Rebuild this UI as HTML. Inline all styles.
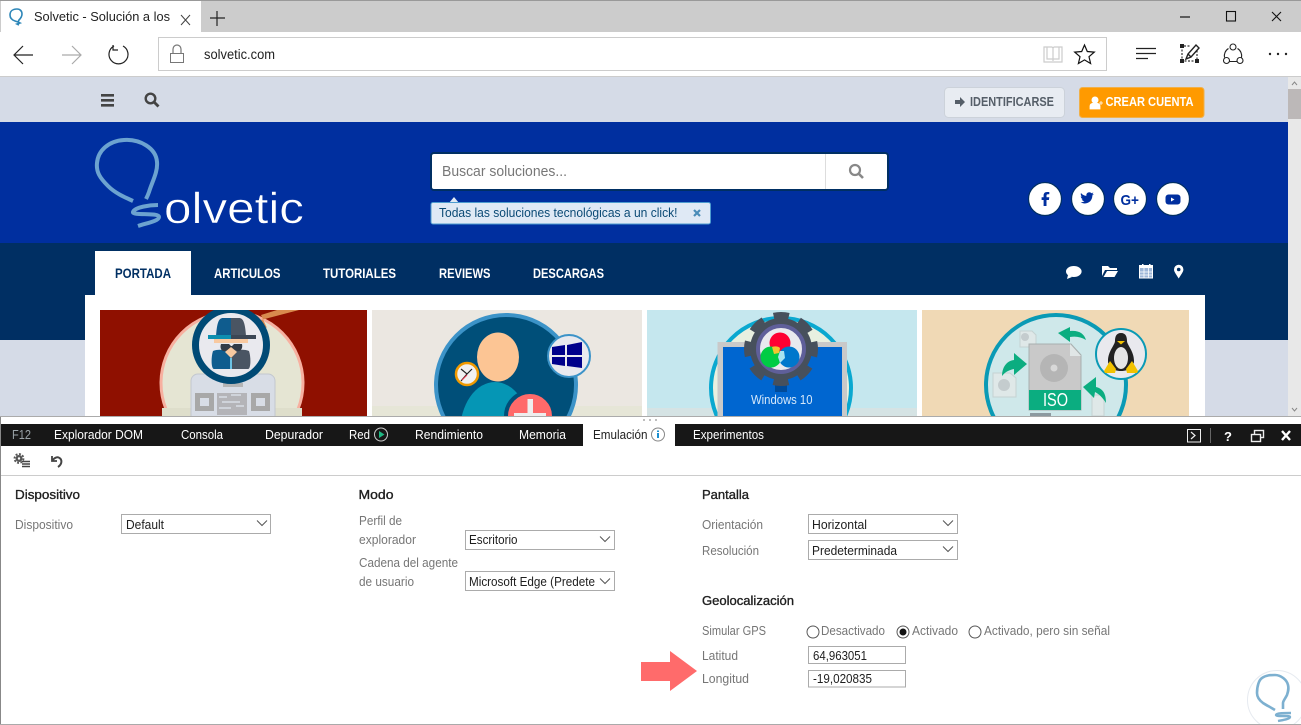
<!DOCTYPE html>
<html lang="es">
<head>
<meta charset="utf-8">
<title>Solvetic</title>
<style>
html,body{margin:0;padding:0;background:#fff;width:1301px;height:725px;overflow:hidden}
svg{display:block}
text{font-family:"Liberation Sans",sans-serif;font-size:12.5px;white-space:pre}
.l{fill:#767676}
.v{fill:#1e1e1e}
.h{font-size:12.8px;fill:#1f1f1f;stroke:#1f1f1f;stroke-width:.35px}
.t{fill:#fff}
.n{font-weight:bold;font-size:14px;fill:#fff}
.s{fill:#fff;stroke:#ababab}
.c{fill:none;stroke:#555;stroke-width:1}
</style>
</head>
<body>
<svg width="1301" height="725" viewBox="0 0 1301 725" xmlns="http://www.w3.org/2000/svg">
<defs>
<clipPath id="c1"><rect x="100" y="310" width="267" height="106"/></clipPath>
<clipPath id="c2"><rect x="372" y="310" width="270" height="106"/></clipPath>
<clipPath id="c3"><rect x="647" y="310" width="270" height="106"/></clipPath>
<clipPath id="c4"><rect x="922" y="310" width="267" height="106"/></clipPath>
<clipPath id="wm"><rect x="1200" y="660" width="101" height="64"/></clipPath>
</defs>

<!-- browser chrome -->
<rect width="1301" height="725" fill="#fff"/>
<rect width="1301" height="32" fill="#ccc"/>
<rect width="1301" height="1" fill="#999"/>
<rect x="1" y="1" width="200" height="31" fill="#fff"/>
<path d="M17 9c-4 0-7 2-7 6 0 3 2 5 5 6l3 1 1-2c2-2 3-4 3-6 0-3-2-5-5-5zM18 22l2 1-3 1 2 1" fill="none" stroke="#2d86b8" stroke-width="1.6"/>
<text x="34" y="21" style="font-size:13px" fill="#222" textLength="136" lengthAdjust="spacingAndGlyphs">Solvetic - Solución a los</text>
<path d="M181 15l9 10M190 15l-9 10" stroke="#444" stroke-width="1" fill="none"/>
<path d="M217 11v15M210 18h15" stroke="#222" stroke-width="1.2" fill="none"/>
<path d="M1180 17h10" stroke="#111" stroke-width="1.2"/>
<rect x="1226.5" y="11.5" width="9" height="9.5" fill="none" stroke="#111" stroke-width="1.1"/>
<path d="M1272 12l9 9M1281 12l-9 9" stroke="#111" stroke-width="1.1"/>

<path d="M33 55H15M23 46l-9 9 9 9" fill="none" stroke="#222" stroke-width="1.2"/>
<path d="M81 55H62M72 46l9 9-9 9" fill="none" stroke="#aaa" stroke-width="1.2"/>
<path d="M114 46a9.5 9.5 0 1 0 9 0M113 45v5h5" fill="none" stroke="#222" stroke-width="1.2"/>
<rect x="158.500" y="37.500" width="948" height="33" fill="#fff" stroke="#ccc"/>
<rect x="170.500" y="53.500" width="13" height="9" fill="#fff" stroke="#777"/>
<path d="M173 53v-4a4 4 0 0 1 8 0v4" fill="none" stroke="#777" stroke-width="1.2"/>
<text x="204" y="59" fill="#222" style="font-size:13.5px" textLength="71" lengthAdjust="spacingAndGlyphs">solvetic.com</text>
<path d="M1044 47h8l1 1 1-1h8v15h-18zM1053 48v13M1047 47v12h6M1059 47v12h-6" fill="none" stroke="#ccc" stroke-width="1.2"/>
<path d="M1084.500 45l2.800 6.500 7 .6-5.300 4.600 1.600 6.800-6.100-3.600-6.100 3.600 1.600-6.800-5.300-4.600 7-.6z" fill="none" stroke="#111" stroke-width="1.2"/>
<path d="M1136 48.500h20M1136 53.500h20M1136 58.500h12" stroke="#222" stroke-width="1.2"/>
<path d="M1182 46v15h15V50M1184 46h7" fill="none" stroke="#333" stroke-width="1.2" stroke-dasharray="2 1.500"/>
<path d="M1180 44h4v4h-4zM1180 59h4v4h-4zM1195 59h4v4h-4z" fill="#222"/>
<path d="M1186 59l2-5 8-9 3 3-8 9zM1188 54l3 3" fill="none" stroke="#222" stroke-width="1.4"/>
<path d="M1228.500 48.500a8.500 8.500 0 0 0-4 9M1237.500 48.500a8.500 8.500 0 0 1 4 9M1229 61.500h8" fill="none" stroke="#222" stroke-width="1.1"/>
<circle cx="1233" cy="47" r="3" fill="#fff" stroke="#222" stroke-width="1.1"/>
<circle cx="1226.500" cy="60.500" r="3" fill="#fff" stroke="#222" stroke-width="1.1"/>
<circle cx="1240" cy="60.500" r="3" fill="#fff" stroke="#222" stroke-width="1.1"/>
<circle cx="1270" cy="54" r="1.200" fill="#222"/><circle cx="1278" cy="54" r="1.200" fill="#222"/><circle cx="1286" cy="54" r="1.200" fill="#222"/>
<rect y="76" width="1301" height="1" fill="#ccc"/>

<!-- page -->
<rect y="77" width="1288" height="339" fill="#d5dbe7"/>
<rect y="122" width="1288" height="121" fill="#002f9f"/>
<rect y="243" width="1288" height="97" fill="#002f63"/>
<rect x="85" y="295" width="1120" height="121" fill="#fff"/>
<rect x="95" y="251" width="96" height="44" fill="#fff"/>

<!-- scrollbar -->
<rect x="1288" y="77" width="13" height="339" fill="#e8e8e8"/>
<rect x="1288" y="89" width="13" height="30" fill="#bcb8b8"/>
<path d="M1292 85l2.500-3 2.500 3M1292 408l2.500 3 2.500-3" fill="none" stroke="#888"/>

<!-- top bar -->
<path d="M101 94h13v2.600h-13zM101 99h13v2.600h-13zM101 104h13v2.600h-13z" fill="#444"/>
<circle cx="150.500" cy="98.500" r="4.800" fill="none" stroke="#444" stroke-width="2.400"/>
<path d="M154 102l4.500 4.500" stroke="#444" stroke-width="2.800"/>
<rect x="944.500" y="87.500" width="120" height="30" rx="4" fill="#e8ecf2" stroke="#ccd2da"/>
<path d="M955 100h5v-3l5 5-5 5v-3h-5z" fill="#555e68"/>
<text x="970" y="106" fill="#555e68" style="font-size:12.500px;font-weight:bold" textLength="84" lengthAdjust="spacingAndGlyphs">IDENTIFICARSE</text>
<rect x="1079.500" y="87.500" width="124.500" height="30" rx="3" fill="#ff9a00" stroke="#f0b04a"/>
<circle cx="1095" cy="100" r="3.500" fill="#fff"/>
<path d="M1090 109v-3c0-2 2-3 5-3s5 1 5 3v3zM1099 103h4M1101 101v4" fill="#fff" stroke="#fff" stroke-width=".8"/>
<text x="1105.500" y="106" fill="#fff" style="font-size:12.500px;font-weight:bold" textLength="88" lengthAdjust="spacingAndGlyphs">CREAR CUENTA</text>

<!-- logo -->
<path d="M133 201C124 197 115 193 108 186C100 178 96 172 97 163C98 151 108 141 124 140C140 139 156 148 157 162C158 172 152 182 149 192C148 195 147 197 146 199" fill="none" stroke="#6ca3d0" stroke-width="4"/>
<path d="M158 205C150 205 135 207 133 212C132 216 159 212 159 217C159 221 147 223 138 226" fill="none" stroke="#6ca3d0" stroke-width="4"/>
<text x="164" y="223" fill="#fff" stroke="#002f9f" stroke-width=".5" style="font-size:44px" textLength="140" lengthAdjust="spacingAndGlyphs">olvetic</text>

<!-- search -->
<rect x="431" y="153" width="457" height="37" rx="3" fill="#fff" stroke="#002f63" stroke-width="2"/>
<rect x="825" y="154" width="1" height="35" fill="#ddd"/>
<text x="442" y="176" fill="#777" style="font-size:14.500px" textLength="125" lengthAdjust="spacingAndGlyphs">Buscar soluciones...</text>
<circle cx="855" cy="170" r="5" fill="none" stroke="#888" stroke-width="2.200"/>
<path d="M859 174l4 4" stroke="#888" stroke-width="2.600"/>
<path d="M449 203l5-6 5 6z" fill="#dfe9f5"/>
<rect x="431" y="202.500" width="279.500" height="21.500" rx="2" fill="#dfe9f5" stroke="#4d9ccf"/>
<text x="439" y="217" fill="#0b4a75" textLength="238.500" lengthAdjust="spacingAndGlyphs">Todas las soluciones tecnológicas a un click!</text>
<path d="M694 210l6 6M700 210l-6 6" stroke="#4a8cb8" stroke-width="2.200"/>

<!-- social -->
<g fill="#fff" stroke="#002f63" stroke-width="1.200">
<circle cx="1045" cy="199" r="16.500"/><circle cx="1088" cy="199" r="16.500"/><circle cx="1130" cy="199" r="16.500"/><circle cx="1173" cy="199" r="16.500"/>
</g>
<path d="M1046.500 206v-6h2.400l.4-2.700h-2.800v-1.700c0-.9.300-1.300 1.300-1.300h1.500v-2.300h-2.200c-2.400 0-3.500 1.400-3.500 3.500v1.800h-2v2.700h2v6z" fill="#002f9f"/>
<path transform="translate(1081 193) scale(.72) translate(-1081 -193)" d="M1081 193c2 2.500 4.500 3.800 7.500 4-.5-3 1.500-5 4-5 1.300 0 2.200.5 3 1.300l2.700-1-1.600 2.600 2.400-.6-2.200 2.200c0 6-4 11-10.500 11-2.200 0-4-.6-5.800-1.700 2 .2 3.800-.3 5.300-1.500-2 0-3.200-1-3.700-2.700h1.800c-2-.6-3.200-2-3.200-4l1.800.5c-1.800-1.300-2.300-3.500-1.500-5.100z" fill="#002f9f"/>
<text x="1120.500" y="205" fill="#002f9f" style="font-size:15px;font-weight:bold" textLength="18.500" lengthAdjust="spacingAndGlyphs">G+</text>
<rect x="1165.500" y="194.500" width="15" height="10" rx="3" fill="#002f9f"/>
<path d="M1171 197.500v4l3.500-2z" fill="#fff"/>

<!-- nav -->
<text x="115" y="278" class="n" style="fill:#002f63" textLength="56" lengthAdjust="spacingAndGlyphs">PORTADA</text>
<text x="214" y="278" class="n" textLength="66.500" lengthAdjust="spacingAndGlyphs">ARTICULOS</text>
<text x="323" y="278" class="n" textLength="73" lengthAdjust="spacingAndGlyphs">TUTORIALES</text>
<text x="439" y="278" class="n" textLength="51.500" lengthAdjust="spacingAndGlyphs">REVIEWS</text>
<text x="533" y="278" class="n" textLength="71" lengthAdjust="spacingAndGlyphs">DESCARGAS</text>
<ellipse cx="1073.800" cy="271.500" rx="7.800" ry="5.500" fill="#fff"/>
<path d="M1068 275l-1 4 5-2z" fill="#fff"/>
<path d="M1102 266v10l3-6h12v-2h-7l-2-2h-6z" fill="#fff"/>
<path d="M1103.500 277h11l3.500-6h-11z" fill="#fff"/>
<rect x="1139.500" y="266.500" width="13" height="11.500" fill="#9db6d8" stroke="#fff"/>
<path d="M1139 265h14v3h-14zM1142 264h1.500v3H1142zM1149 264h1.500v3H1149z" fill="#fff"/>
<path d="M1144 268v10M1148.500 268v10M1139.500 272h13M1139.500 275h13" stroke="#fff" stroke-width=".8"/>
<path d="M1178.700 278.500c-2-3.500-4.700-6.500-4.700-9a4.700 4.700 0 0 1 9.400 0c0 2.500-2.700 5.500-4.700 9z" fill="#fff"/>
<circle cx="1178.700" cy="269.500" r="1.800" fill="#002f63"/>

<!-- card 1 -->
<g clip-path="url(#c1)">
<rect x="100" y="310" width="267" height="106" fill="#8f1000"/>
<circle cx="232" cy="383" r="71" fill="#e5e5d3" stroke="#f7b0a0" stroke-width="3"/>
<rect x="162" y="408" width="140" height="8" fill="#dedecb"/>
<path d="M257 321l42-11h-22l-16 5 6 13z" fill="#d98a4e"/>
<rect x="191" y="374" width="84" height="48" rx="7" fill="#d8dde6" stroke="#c2c7cf"/>
<rect x="223" y="383" width="20" height="4" fill="#b5b5b5"/>
<rect x="195" y="393" width="19" height="18" fill="#a8a8a8"/><rect x="200" y="398" width="9" height="8" fill="#d8dde6"/>
<rect x="251" y="393" width="19" height="18" fill="#a8a8a8"/><rect x="256" y="398" width="9" height="8" fill="#d8dde6"/>
<rect x="217" y="393" width="30" height="22" fill="#b4b4b8"/>
<path d="M219 397h8M231 395h10M222 402h18M219 408h12M236 406h8" stroke="#d8dde6" stroke-width="1.500"/>
<circle cx="231" cy="345" r="35.500" fill="#e9e9ee" stroke="#004a75" stroke-width="7"/>
<path d="M231 318h-8c-4 0-6 4-7 18h15z" fill="#0f5c8e"/>
<path d="M231 318h8c4 0 6 4 7 18h-15z" fill="#4a5563"/>
<rect x="208" y="335" width="23" height="4" fill="#0d8fb0"/>
<rect x="231" y="335" width="25" height="4" fill="#3b4654"/>
<rect x="214" y="339" width="34" height="4" fill="#f8c9a0"/>
<path d="M213 351c8-3 14 0 18 3v15h-17c-3 0-3-12-1-18z" fill="#0f5c8e"/>
<path d="M249 351c-8-3-14 0-18 3v15h17c3 0 3-12 1-18z" fill="#4a5563"/>
<path d="M221 344h8l2 2h1l2-2h8c1 4-1 8-5 7-3 0-5-2-5.500-3-.5 1-3 3-6 3-4 1-6-3-4.500-7z" fill="#333b46"/>
<path d="M225 352l6-5 6 5-6 6z" fill="#f8c9a0"/>
<path d="M230 358h2v11h-2z" fill="#6cc2e4"/>
</g>

<!-- card 2 -->
<g clip-path="url(#c2)">
<rect x="372" y="310" width="270" height="106" fill="#ebe7e1"/>
<rect x="372" y="406" width="270" height="10" fill="#e6e6d7"/>
<circle cx="506" cy="385" r="70" fill="#004f79" stroke="#3c93c8" stroke-width="4"/>
<ellipse cx="495" cy="432" rx="35" ry="50" fill="#0596b5"/>
<ellipse cx="498" cy="357" rx="21" ry="24.500" fill="#fcc594"/>
<circle cx="569" cy="356" r="21" fill="#e9e9ee" stroke="#3c93c8" stroke-width="2"/>
<path d="M552 347l13-2v10h-13zM567 345l15-3v13h-15zM552 357h13v9l-13-2zM567 357h15v11l-15-2z" fill="#00008b"/>
<circle cx="467" cy="374" r="11" fill="#f1f1f1" stroke="#f09a00" stroke-width="2.500"/>
<path d="M461 369l6 5 5-5M467 374l-6 7" stroke="#222" stroke-width="1.200" fill="none"/>
<path d="M467 375l-5 5" stroke="#e5334c" stroke-width="1"/>
<circle cx="530" cy="416" r="24" fill="#ff6a6a" stroke="#004f79" stroke-width="4"/>
<rect x="527.500" y="399" width="5.500" height="14" fill="#eee"/>
<rect x="514" y="413" width="32" height="3" fill="#eee"/>
</g>

<!-- card 3 -->
<g clip-path="url(#c3)">
<rect x="647" y="310" width="270" height="106" fill="#c5e7ee"/>
<rect x="647" y="408" width="270" height="8" fill="#d5e3e4"/>
<circle cx="781" cy="388" r="70" fill="#e8f0e0" stroke="#0aa8d0" stroke-width="4"/>
<rect x="717.500" y="342" width="129.500" height="80" fill="#c9c9c9"/>
<rect x="723" y="347" width="119" height="70" fill="#0066d0"/>
<rect x="775" y="380" width="12" height="12" fill="#004a98"/>
<circle cx="781" cy="349" r="31" fill="#47505c"/>
<circle cx="781" cy="349" r="33" fill="none" stroke="#47505c" stroke-width="8" stroke-dasharray="15 10.920" stroke-dashoffset="7.500"/>
<circle cx="781" cy="349" r="23" fill="#e9e9ee" stroke="#5f5f9a" stroke-width="4"/>
<circle cx="780" cy="343" r="10.500" fill="#ff0033"/>
<circle cx="771" cy="357" r="10.500" fill="#00cc44"/>
<circle cx="789" cy="357" r="10.500" fill="#0077cc"/>
<path d="M772 347c3-1 6-1 8 1l-1 5-5 1z" fill="#f2c530"/>
<path d="M780 351l4 0 1 7-5 5-2-6z" fill="#a8e4f0"/>
<text x="751" y="404" fill="#d5e8fa" textLength="61.500" lengthAdjust="spacingAndGlyphs">Windows 10</text>
</g>

<!-- card 4 -->
<g clip-path="url(#c4)">
<rect x="922" y="310" width="267" height="106" fill="#f0d9b5"/>
<circle cx="1056" cy="385" r="70" fill="#cfe8ea" stroke="#0a9ab5" stroke-width="4"/>
<path d="M1020 331h12l4 4v12h-16zM993 373h17l6 5v19h-23zM1092 395h12v21h-12z" fill="#dfe8e8" stroke="#c5d2d2"/>
<circle cx="1004" cy="385" r="6" fill="#c4ccce"/>
<circle cx="1025" cy="337" r="4" fill="#c4ccce"/>
<path d="M1029 344h42l10 11v55h-52z" fill="#c9c9c9" stroke="#a8b0b0"/>
<path d="M1070 344v12h11z" fill="#e0e6e6"/>
<circle cx="1054" cy="368" r="14" fill="#b5b5b5"/>
<circle cx="1054" cy="368" r="3.500" fill="#d8d8d8"/>
<rect x="1029" y="390" width="52" height="20" fill="#0bad80"/>
<text x="1043" y="406" fill="#fff" style="font-size:18px" textLength="25" lengthAdjust="spacingAndGlyphs">ISO</text>
<rect x="1030" y="413" width="21" height="3" fill="#8d9aa0"/>
<path d="M1002 376c0-8 4-15 12-16v-7l13 11-13 11v-6c-5 1-9 3-12 7z" fill="#0bad80"/>
<path d="M1058 333l12-6v4c8-1 14 2 16 9-5-3-10-4-16-3v5z" fill="#0bad80"/>
<path d="M1106 403c0-8-2-14-10-16v-10l-13 10 11 11 1-6c4 2 8 6 11 11z" fill="#0bad80"/>
<circle cx="1121" cy="354" r="25" fill="#e9e9ee" stroke="#0a9ab5" stroke-width="2"/>
<path d="M1121 333c-5 0-6 4-6 8 0 4-7 10-7 20 0 5 4 10 13 10s13-5 13-10c0-10-7-16-7-20 0-4-1-8-6-8z" fill="#222"/>
<ellipse cx="1121" cy="358" rx="7" ry="11" fill="#e5e5e5"/>
<path d="M1117 341h8l-4 3.500z" fill="#f2c200"/>
<path d="M1104 371l6-10 6 8-1 4h-10zM1138 371l-6-10-6 8 1 4h10z" fill="#f2c200"/>
</g>

<!-- devtools -->
<rect y="416" width="1301" height="1" fill="#ababab"/>
<rect y="417" width="1301" height="308" fill="#fff"/>
<circle cx="644" cy="420" r="1" fill="#aaa"/><circle cx="650" cy="420" r="1" fill="#aaa"/><circle cx="656" cy="420" r="1" fill="#aaa"/>
<rect y="424" width="1301" height="22" fill="#171717"/>
<rect x="583" y="424" width="92" height="22" fill="#fff"/>
<text x="12" y="439" fill="#9aa3a8" textLength="19" lengthAdjust="spacingAndGlyphs">F12</text>
<text x="54" y="439" class="t" textLength="89" lengthAdjust="spacingAndGlyphs">Explorador DOM</text>
<text x="181" y="439" class="t" textLength="42" lengthAdjust="spacingAndGlyphs">Consola</text>
<text x="265" y="439" class="t" textLength="58" lengthAdjust="spacingAndGlyphs">Depurador</text>
<text x="349" y="439" class="t" textLength="21" lengthAdjust="spacingAndGlyphs">Red</text>
<circle cx="381" cy="434.500" r="6.500" fill="none" stroke="#ccc"/>
<path d="M379 431v7l5.500-3.500z" fill="#1fb883"/>
<text x="415" y="439" class="t" textLength="68" lengthAdjust="spacingAndGlyphs">Rendimiento</text>
<text x="519" y="439" class="t" textLength="47" lengthAdjust="spacingAndGlyphs">Memoria</text>
<text x="593" y="439" fill="#222" textLength="54.500" lengthAdjust="spacingAndGlyphs">Emulación</text>
<circle cx="658" cy="434.500" r="6.500" fill="#fff" stroke="#888"/>
<path d="M657 433h2v5h-2zM657 430.500h2v1.500h-2z" fill="#1a8fd0"/>
<text x="693" y="439" class="t" textLength="71" lengthAdjust="spacingAndGlyphs">Experimentos</text>
<rect x="1187.500" y="429.500" width="13" height="12.500" fill="none" stroke="#eee"/>
<path d="M1191 432l4 3.500-4 3.500" fill="none" stroke="#eee" stroke-width="1.200"/>
<rect x="1210" y="428" width="1" height="15" fill="#666"/>
<text x="1224" y="441" fill="#fff" style="font-size:13px;font-weight:bold">?</text>
<rect x="1254.500" y="430.500" width="9" height="7" fill="none" stroke="#eee" stroke-width="1.400"/>
<rect x="1251.500" y="434.500" width="9" height="7" fill="#171717" stroke="#eee" stroke-width="1.400"/>
<path d="M1282 431l8 9M1290 431l-8 9" stroke="#fff" stroke-width="2.400"/>
<circle cx="19" cy="458.500" r="3.500" fill="#555"/>
<circle cx="19" cy="458.500" r="4.500" fill="none" stroke="#555" stroke-width="1.800" stroke-dasharray="2 1.500"/>
<circle cx="19" cy="458.500" r="1.200" fill="#fff"/>
<path d="M22 461.500h8M22 464h8M22 466.500h8" stroke="#444" stroke-width="1.400"/>
<path d="M52 456v5h5" fill="none" stroke="#444" stroke-width="1.800"/>
<path d="M52.500 460.500c2-3 5-4 7-2.500 2.500 1.500 3 6-1.500 9" fill="none" stroke="#444" stroke-width="2"/>
<rect y="475" width="1301" height="1" fill="#ccc"/>
<rect y="417" width="1" height="308" fill="#888"/>
<rect y="724" width="1301" height="1" fill="#aaa"/>

<!-- dispositivo -->
<text x="15" y="499" class="h" textLength="65" lengthAdjust="spacingAndGlyphs">Dispositivo</text>
<text x="15" y="529" class="l" textLength="58" lengthAdjust="spacingAndGlyphs">Dispositivo</text>
<rect x="121.500" y="514.500" width="149" height="19" class="s"/>
<text x="126" y="529" class="v" textLength="38" lengthAdjust="spacingAndGlyphs">Default</text>
<path d="M257 520.500l5 5 5-5" class="c"/>

<!-- modo -->
<text x="358.500" y="499" class="h" textLength="35" lengthAdjust="spacingAndGlyphs">Modo</text>
<text x="359" y="525" class="l" textLength="43" lengthAdjust="spacingAndGlyphs">Perfil de</text>
<text x="359" y="544" class="l" textLength="57" lengthAdjust="spacingAndGlyphs">explorador</text>
<rect x="465.500" y="530.500" width="149" height="19" class="s"/>
<text x="469" y="544" class="v" textLength="48.500" lengthAdjust="spacingAndGlyphs">Escritorio</text>
<path d="M600 536.500l5 5 5-5" class="c"/>
<text x="359" y="567" class="l" textLength="99" lengthAdjust="spacingAndGlyphs">Cadena del agente</text>
<text x="359" y="586" class="l" textLength="55" lengthAdjust="spacingAndGlyphs">de usuario</text>
<rect x="465.500" y="571.500" width="149" height="19" class="s"/>
<text x="469" y="586" class="v" textLength="126" lengthAdjust="spacingAndGlyphs">Microsoft Edge (Predete</text>
<path d="M600 578.500l5 5 5-5" class="c"/>

<!-- pantalla -->
<text x="702" y="499" class="h" textLength="47" lengthAdjust="spacingAndGlyphs">Pantalla</text>
<text x="702" y="529" class="l" textLength="61" lengthAdjust="spacingAndGlyphs">Orientación</text>
<rect x="808.500" y="514.500" width="149" height="19" class="s"/>
<text x="812" y="529" class="v" textLength="55" lengthAdjust="spacingAndGlyphs">Horizontal</text>
<path d="M943 520.500l5 5 5-5" class="c"/>
<text x="702" y="555" class="l" textLength="57" lengthAdjust="spacingAndGlyphs">Resolución</text>
<rect x="808.500" y="540.500" width="149" height="19" class="s"/>
<text x="812" y="555" class="v" textLength="85" lengthAdjust="spacingAndGlyphs">Predeterminada</text>
<path d="M943 546.500l5 5 5-5" class="c"/>

<!-- geo -->
<text x="702" y="605" class="h" textLength="92" lengthAdjust="spacingAndGlyphs">Geolocalización</text>
<text x="702" y="635" class="l" textLength="64" lengthAdjust="spacingAndGlyphs">Simular GPS</text>
<circle cx="813" cy="632" r="6" fill="#fff" stroke="#555"/>
<text x="821" y="635" class="l" textLength="64" lengthAdjust="spacingAndGlyphs">Desactivado</text>
<circle cx="903" cy="632" r="6" fill="#fff" stroke="#555"/>
<circle cx="903" cy="632" r="3.500" fill="#111"/>
<text x="912" y="635" class="l" textLength="46" lengthAdjust="spacingAndGlyphs">Activado</text>
<circle cx="975" cy="632" r="6" fill="#fff" stroke="#555"/>
<text x="984" y="635" class="l" textLength="126" lengthAdjust="spacingAndGlyphs">Activado, pero sin señal</text>
<text x="702" y="660" class="l" textLength="36" lengthAdjust="spacingAndGlyphs">Latitud</text>
<rect x="808.500" y="646.500" width="97" height="17" class="s"/>
<text x="813" y="660" class="v" textLength="54" lengthAdjust="spacingAndGlyphs">64,963051</text>
<text x="702" y="683" class="l" textLength="47" lengthAdjust="spacingAndGlyphs">Longitud</text>
<rect x="808.500" y="670.500" width="97" height="16.500" class="s"/>
<text x="813" y="683" class="v" textLength="59" lengthAdjust="spacingAndGlyphs">-19,020835</text>

<!-- arrow -->
<path d="M641 662h29v-11l27 20-27 20v-10h-29z" fill="#ff6b6b"/>

<!-- watermark -->
<g clip-path="url(#wm)">
<circle cx="1277" cy="700" r="29.500" fill="#fff" stroke="#e6eaf0"/>
<path d="M1275 710C1270 707 1266 705 1263 703C1259 700 1257 697 1257 693C1257 686 1259 680 1262 678C1266 675 1271 675 1275 675C1281 675 1287 680 1288 685C1289 689 1288 692 1287 695C1285 699 1283 701 1283 703C1283 705 1283 707 1283 709" fill="none" stroke="#7db0d0" stroke-width="2.600"/>
<path d="M1291 713C1285 713 1276 713 1276 715C1276 717 1290 715 1290 717C1290 719 1283 720 1278 721" fill="none" stroke="#7db0d0" stroke-width="2.400"/>
</g>
</svg>
</body>
</html>
